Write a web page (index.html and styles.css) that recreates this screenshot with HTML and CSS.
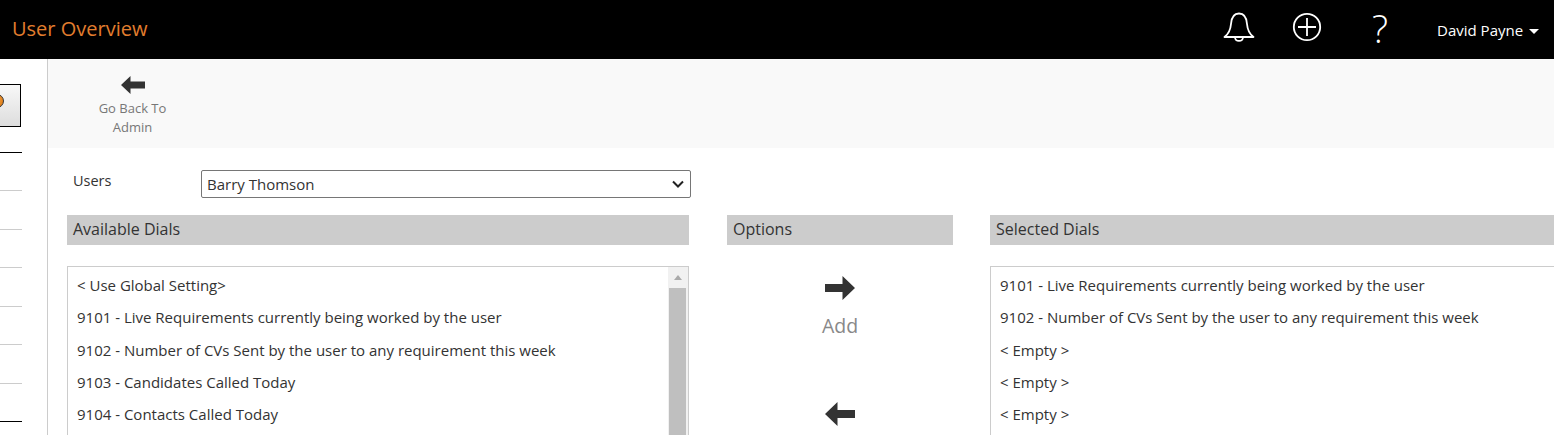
FILE: index.html
```html
<!DOCTYPE html>
<html lang="en">
<head>
    <meta charset="UTF-8">
    <title>User Overview</title>
    <link rel="stylesheet" href="styles.css">
</head>
<body>
    <header class="topbar">
        <div class="page-title">User Overview</div>
        <div class="top-actions">
            <svg class="icon-bell" width="32" height="32" viewBox="0 0 32 32" fill="none" stroke="#fff" stroke-width="1.8" stroke-linejoin="round">
                <path d="M1.500 26c4-3 6-7 6.500-13 .5-7 3.500-10.500 8-10.500s7.500 3.500 8 10.500c.5 6 2.500 10 6.500 13z"/>
                <path d="M12 26.500c.5 4.500 7.500 4.500 8 0"/>
            </svg>
            <svg class="icon-plus" width="30" height="30" viewBox="0 0 30 30" fill="none" stroke="#fff" stroke-width="1.800">
                <circle cx="15" cy="15" r="13.200"/>
                <path d="M15 6v18M6 15h18"/>
            </svg>
            <span class="icon-help">?</span>
            <div class="user-menu">David Payne <span class="caret"></span></div>
        </div>
    </header>
    <div class="page">
        <aside class="sidebar">
            <div class="side-btn"><span class="side-dot"></span></div>
            <div class="side-lines">
                <div class="line dark"></div>
                <div class="line"></div>
                <div class="line"></div>
                <div class="line"></div>
                <div class="line"></div>
                <div class="line"></div>
                <div class="line"></div>
                <div class="line dark"></div>
            </div>
        </aside>
        <main class="content">
            <div class="toolbar">
                <a class="tool">
                    <svg class="arrow" width="24" height="18" viewBox="0 0 24 18"><path d="M0 9 9.500 0v5.500H24v7H9.500V18z"/></svg>
                    <span>Go Back To<br>Admin</span>
                </a>
            </div>
            <div class="user-row">
                <label class="user-label">Users</label>
                <div class="fake-select">Barry Thomson
                    <svg width="12" height="8" viewBox="0 0 12 8" fill="none" stroke="#222" stroke-width="2"><path d="M1 1.500 6 6.500l5-5"/></svg>
                </div>
            </div>
            <div class="dials">
                <section class="col col-left">
                    <h2 class="col-head">Available Dials</h2>
                    <div class="list-box">
                        <ul class="dial-list">
                            <li>&lt; Use Global Setting&gt;</li>
                            <li>9101 - Live Requirements currently being worked by the user</li>
                            <li>9102 - Number of CVs Sent by the user to any requirement this week</li>
                            <li>9103 - Candidates Called Today</li>
                            <li>9104 - Contacts Called Today</li>
                        </ul>
                        <div class="scrollbar">
                            <div class="scroll-up"></div>
                            <div class="scroll-thumb"></div>
                        </div>
                    </div>
                </section>
                <section class="col col-mid">
                    <h2 class="col-head">Options</h2>
                    <div class="option">
                        <svg class="arrow" width="30" height="24" viewBox="0 0 30 24"><path d="M30 12 17.500 0v8H0v8h17.500v8z"/></svg>
                        <span>Add</span>
                    </div>
                    <div class="option option-remove">
                        <svg class="arrow" width="30" height="24" viewBox="0 0 30 24"><path d="M0 12 12.500 0v8H30v8H12.500v8z"/></svg>
                    </div>
                </section>
                <section class="col col-right">
                    <h2 class="col-head">Selected Dials</h2>
                    <div class="list-box">
                        <ul class="dial-list">
                            <li>9101 - Live Requirements currently being worked by the user</li>
                            <li>9102 - Number of CVs Sent by the user to any requirement this week</li>
                            <li>&lt; Empty &gt;</li>
                            <li>&lt; Empty &gt;</li>
                            <li>&lt; Empty &gt;</li>
                        </ul>
                    </div>
                </section>
            </div>
        </main>
    </div>
</body>
</html>
```

FILE: styles.css
```css
html, body {
    margin: 0;
    height: 435px;
    overflow: hidden;
}
body {
    font-family: "Open Sans", sans-serif;
    font-size: 14px;
    color: #333;
    background: #fff;
}
.topbar {
    height: 59px;
    background: #000;
    display: flex;
    justify-content: space-between;
    align-items: center;
}
.page-title {
    margin: -3px 0 0 12px;
    font-size: 20px;
    color: #e27d2e;
}
.top-actions {
    display: flex;
    align-items: center;
    color: #fff;
}
.icon-bell {
    margin: -5px 37px 0 0;
}
.icon-plus {
    margin: -5px 50px 0 0;
}
.icon-help {
    font-size: 38px;
    font-weight: 300;
    line-height: 38px;
    margin: -4px 49px 0 0;
}
.user-menu {
    font-size: 15px;
    margin-right: 15px;
}
.caret {
    display: inline-block;
    margin-left: 2px;
    vertical-align: 2px;
    border-top: 5px solid #fff;
    border-left: 5px solid transparent;
    border-right: 5px solid transparent;
}
.page {
    display: flex;
    height: 376px;
}
.sidebar {
    width: 47px;
    border-right: 1px solid #ccc;
    flex: none;
    overflow: hidden;
}
.side-btn {
    height: 43px;
    width: 61px;
    margin: 25px 0 0 -40px;
    border: 1px solid #000;
    background: linear-gradient(#f8f8f8, #ddd);
    display: flex;
    align-items: flex-start;
    justify-content: flex-end;
    padding: 9px 16px 0 0;
    box-sizing: border-box;
}
.side-dot {
    width: 14px;
    height: 14px;
    border-radius: 50%;
    background: radial-gradient(circle at 35% 35%, #f5a94a, #d9720c);
    border: 1px solid #333;
    box-sizing: border-box;
}
.side-lines {
    margin-top: 25px;
}
.line {
    width: 22px;
    height: 1px;
    background: #ccc;
    margin-bottom: 37.430px;
}
.line.dark {
    background: #000;
}
.content {
    flex: 1;
    min-width: 0;
    overflow: hidden;
}
.toolbar {
    height: 89px;
    background: #f9f9f9;
    padding-left: 41px;
    box-sizing: border-box;
}
.tool {
    display: flex;
    flex-direction: column;
    align-items: center;
    width: 87px;
    padding-top: 17px;
    font-size: 13px;
    line-height: 19px;
    color: #777;
    text-align: center;
}
.tool .arrow {
    margin-bottom: 5px;
}
.arrow {
    fill: #333;
    display: block;
}
.user-row {
    display: flex;
    align-items: flex-start;
    padding: 22px 0 0 25px;
    height: 45px;
}
.user-label {
    width: 128px;
    line-height: 22px;
    font-size: 14.500px;
}
.fake-select {
    width: 490px;
    height: 28px;
    border: 1px solid #767676;
    border-radius: 2px;
    padding: 0 6px 0 5px;
    box-sizing: border-box;
    display: flex;
    align-items: center;
    justify-content: space-between;
    font-size: 15px;
}
.dials {
    display: flex;
    padding-left: 19px;
}
.col-head {
    margin: 0;
    height: 30px;
    line-height: 28px;
    padding-left: 6px;
    background: #ccc;
    font-size: 16px;
    font-weight: 400;
    color: #333;
}
.col-left {
    width: 622px;
    flex: none;
}
.col-mid {
    width: 226px;
    margin-left: 38px;
    flex: none;
}
.col-right {
    width: 600px;
    margin-left: 37px;
    flex: none;
}
.list-box {
    margin-top: 21px;
    height: 200px;
    border: 1px solid #ccc;
    display: flex;
    justify-content: space-between;
    font-size: 15px;
}
.dial-list {
    list-style: none;
    margin: 0;
    padding: 2px 0 0 9px;
}
.dial-list li {
    height: 32.300px;
    line-height: 32px;
    white-space: nowrap;
}
.scrollbar {
    width: 20px;
    background: #f1f1f1;
}
.scroll-up {
    height: 21px;
    position: relative;
}
.scroll-up::after {
    content: "";
    position: absolute;
    left: 6px;
    top: 8px;
    border-bottom: 5px solid #aaa;
    border-left: 4px solid transparent;
    border-right: 4px solid transparent;
}
.scroll-thumb {
    width: 17px;
    margin-left: 1px;
    height: 170px;
    background: #bfbfbf;
}
.option {
    display: flex;
    flex-direction: column;
    align-items: center;
    font-size: 19.500px;
    color: #888;
    padding-top: 31px;
}
.option span {
    margin-top: 12px;
}
.option-remove {
    padding-top: 63px;
}
```
